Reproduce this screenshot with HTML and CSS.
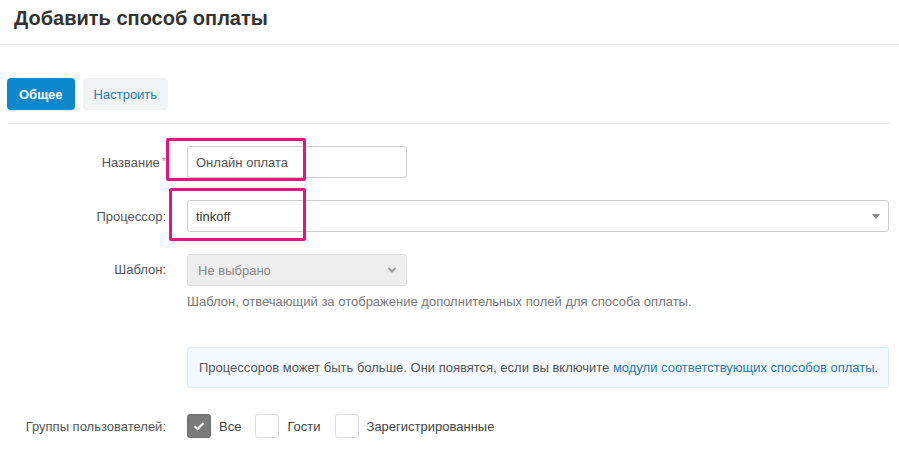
FILE: index.html
```html
<!DOCTYPE html>
<html lang="ru">
<head>
  <meta charset="UTF-8" />
  <title>Добавить способ оплаты</title>
  <link rel="stylesheet" href="styles.css">
</head>
<body>
  <div class="page-header">
    <h1 class="page-title">Добавить способ оплаты</h1>
  </div>

  <div class="content">
    <div class="tabs">
      <a class="tab tab-active" href="#">Общее</a>
      <a class="tab" href="#">Настроить</a>
    </div>

    <form class="form">
      <div class="form-row">
        <label class="form-label">Название<span class="required">*</span></label>
        <div class="form-control-wrap">
          <input class="input input-short" type="text" value="Онлайн оплата">
        </div>
      </div>

      <div class="form-row">
        <label class="form-label">Процессор:</label>
        <div class="form-control-wrap">
          <div class="select-box">
            <span>tinkoff</span>
            <span class="select-arrow"></span>
          </div>
        </div>
      </div>

      <div class="form-row form-row-top">
        <label class="form-label">Шаблон:</label>
        <div class="form-control-wrap">
          <div class="select-box select-disabled input-short">
            <span>Не выбрано</span>
            <svg class="chevron" width="10" height="8" viewBox="0 0 10 8">
              <path d="M1.5 2 L5 5.5 L8.5 2" fill="none" stroke="#999" stroke-width="1.8"/>
            </svg>
          </div>
          <div class="help-text">Шаблон, отвечающий за отображение дополнительных полей для способа оплаты.</div>
        </div>
      </div>

      <div class="form-row form-row-info">
        <div></div>
        <div class="info-box">
          Процессоров может быть больше. Они появятся, если вы включите <a href="#">модули соответствующих способов оплаты</a>.
        </div>
      </div>

      <div class="form-row form-row-groups">
        <label class="form-label">Группы пользователей:</label>
        <div class="checks">
          <label class="check"><span class="check-box checked">
            <svg width="12" height="10" viewBox="0 0 12 10"><path d="M1.5 5.2 L4.6 8 L10.5 2" fill="none" stroke="#fff" stroke-width="2.2"/></svg>
          </span>Все</label>
          <label class="check"><span class="check-box"></span>Гости</label>
          <label class="check"><span class="check-box"></span>Зарегистрированные</label>
        </div>
      </div>

      <!-- highlight frames over the first two fields -->
      <div class="mark mark-name"></div>
      <div class="mark mark-processor"></div>
    </form>
  </div>
</body>
</html>
```

FILE: styles.css
```css
* {
  margin: 0;
  padding: 0;
  box-sizing: border-box;
}

:root {
  --text: #555;
  --title: #333;
  --muted: #777;
  --border: #ccc;
  --primary: #0b87cb;
  --link: #2a7ab8;
  --mark: #e8137f;
}

body {
  font-family: "Liberation Sans", Arial, sans-serif;
  font-size: 13px;
  color: var(--text);
  background: #fff;
}

.page-header {
  height: 45px;
  padding: 0 14px;
  border-bottom: 1px solid #ececec;
}

.page-title {
  font-size: 20px;
  font-weight: 700;
  color: var(--title);
  line-height: 36px;
}

.content {
  padding: 0 10px 0 8px;
}

.tabs {
  display: flex;
  gap: 8px;
  padding: 33px 0 13px;
  border-bottom: 1px solid #e3e3e3;
}

.tab {
  display: inline-flex;
  align-items: center;
  height: 32px;
  padding: 0 11px;
  border-radius: 4px;
  background: #f2f3f4;
  color: var(--link);
  text-decoration: none;
}

.tab-active {
  background: var(--primary);
  color: #fff;
  font-weight: 700;
  padding: 0 12px;
  margin-left: -1px;
}

.form {
  position: relative;
  padding-top: 22px;
}

.form-row {
  display: grid;
  grid-template-columns: 163px 1fr;
  column-gap: 16px;
  align-items: center;
  margin-bottom: 22px;
}

.form-row-top {
  align-items: start;
}

.form-row-top .form-label {
  line-height: 32px;
}

.form-label {
  text-align: right;
  padding-right: 5px;
}

.required {
  color: #c88;
  font-size: 11px;
  vertical-align: top;
  margin-left: 2px;
}

.input,
.select-box {
  height: 32px;
  border: 1px solid var(--border);
  border-radius: 3px;
  font: inherit;
  color: var(--text);
  padding: 0 8px;
  background: #fff;
}

.input-short {
  width: 220px;
}

.select-box {
  display: flex;
  align-items: center;
  justify-content: space-between;
  color: #333;
}

.select-arrow {
  width: 0;
  height: 0;
  border-left: 4px solid transparent;
  border-right: 4px solid transparent;
  border-top: 5px solid #888;
}

.select-disabled {
  background: #eee;
  border-color: #e0e0e0;
  color: #888;
  padding: 0 9px 0 10px;
}

.help-text {
  color: var(--muted);
  margin-top: 7px;
  line-height: 17px;
}

.form-row-info {
  margin-top: 37px;
  margin-bottom: 26px;
}

.info-box {
  background: #f3f9fd;
  border: 1px solid #deedf6;
  border-radius: 3px;
  padding: 11px 8px 11px 11px;
  line-height: 17px;
  white-space: nowrap;
}

.info-box a {
  color: var(--link);
  text-decoration: none;
}

.checks {
  display: flex;
  align-items: center;
}

.check {
  display: inline-flex;
  align-items: center;
  gap: 8px;
  margin-right: 14px;
  color: #444;
}

.check-box {
  width: 24px;
  height: 24px;
  border: 1px solid #ddd;
  border-radius: 3px;
  display: inline-flex;
  align-items: center;
  justify-content: center;
  background: #fff;
}

.check-box.checked {
  background: #7a7a7a;
  border-color: #6d6d6d;
}

/* Pink frames */
.mark {
  position: absolute;
  border: 3px solid var(--mark);
  border-radius: 2px;
}

.mark-name {
  left: 158px;
  top: 14px;
  width: 140px;
  height: 43px;
}

.mark-processor {
  left: 161px;
  top: 64px;
  width: 137px;
  height: 53px;
}
```
